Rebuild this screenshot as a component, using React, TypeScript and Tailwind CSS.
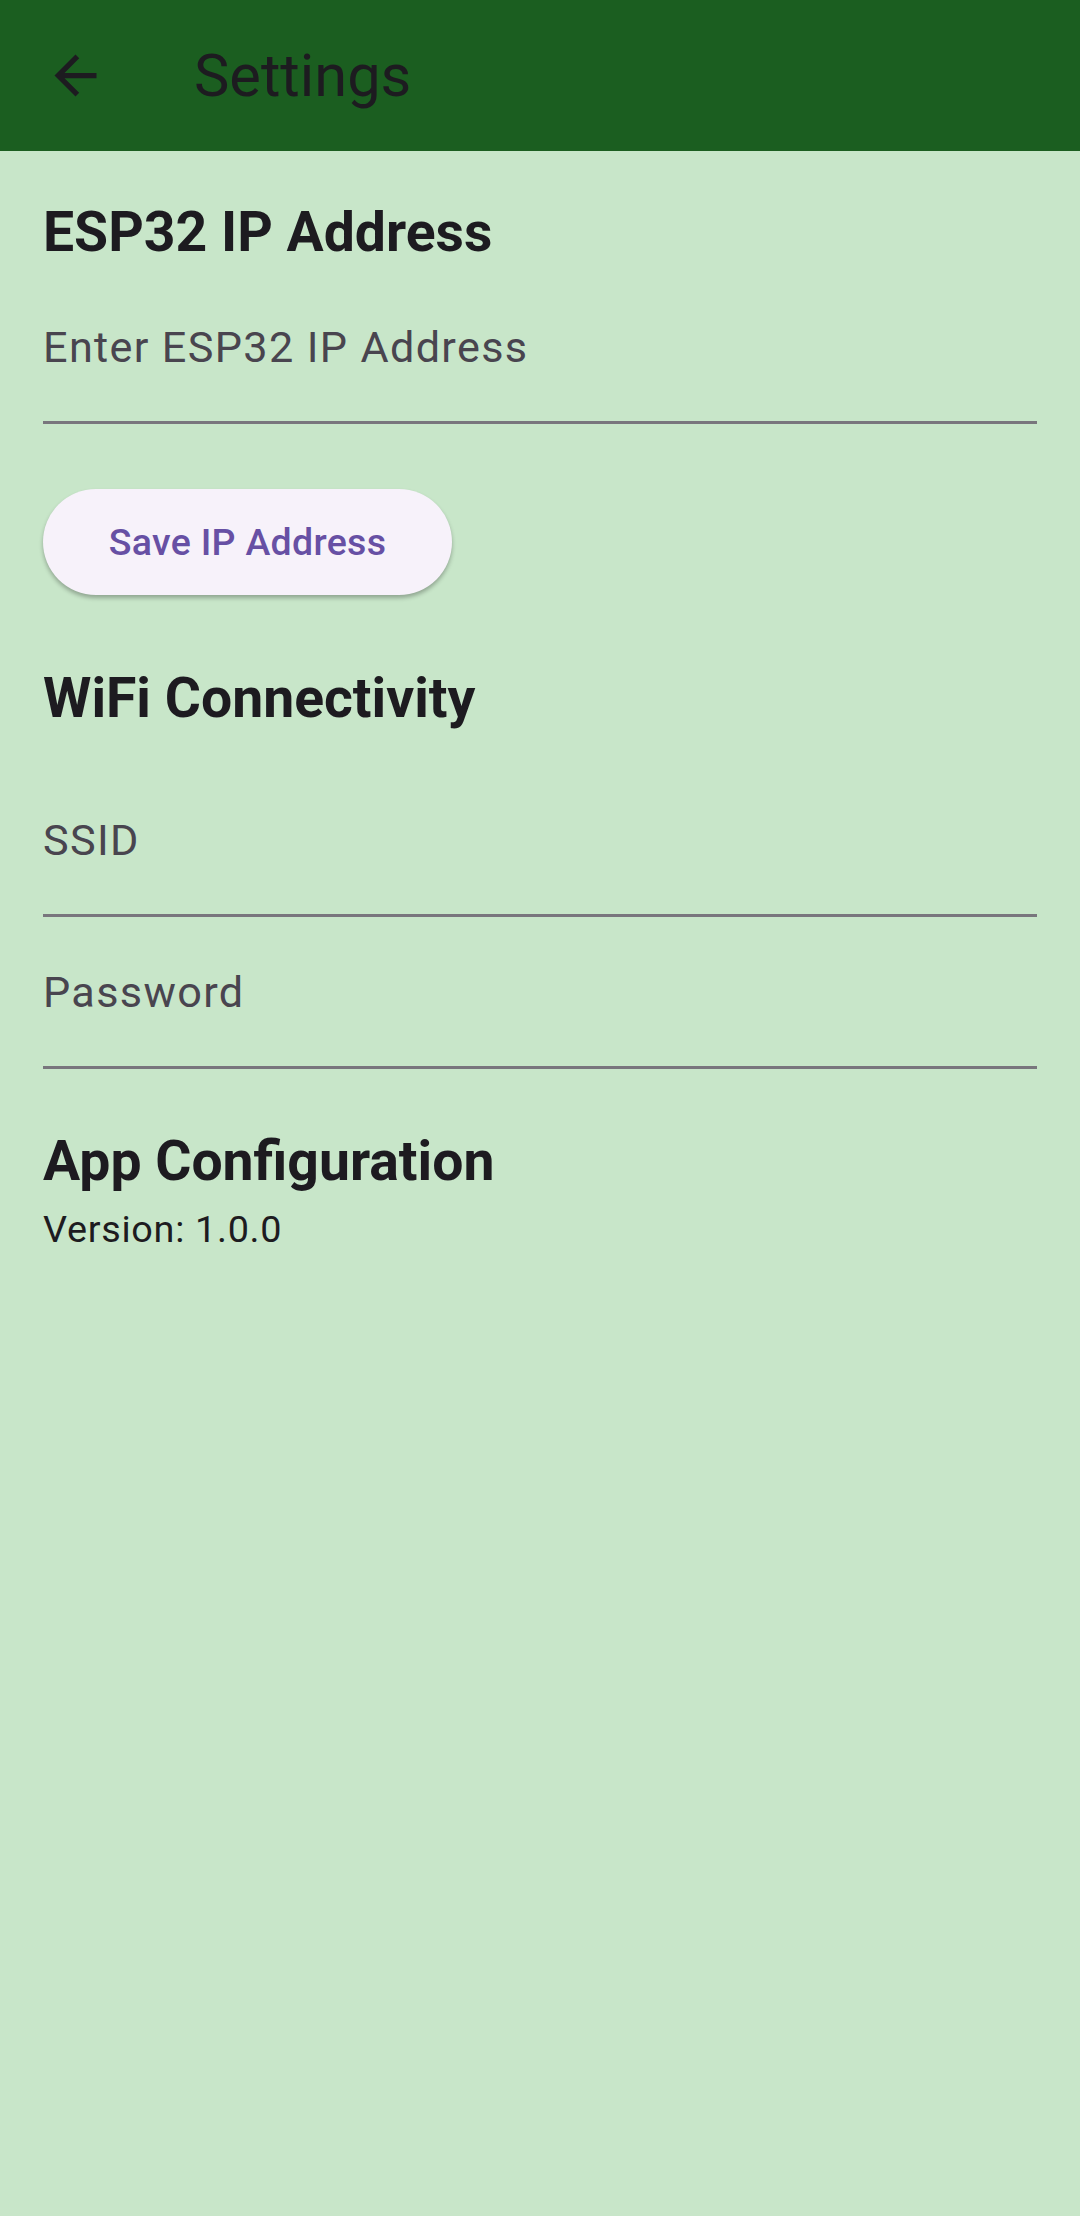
import React from "react";

function BackArrow() {
  return (
    <svg width="63" height="63" viewBox="0 0 24 24" className="block">
      <path
        fill="#1d1b20"
        d="M20 11H7.83l5.59-5.59L12 4l-8 8 8 8 1.41-1.41L7.83 13H20v-2z"
      />
    </svg>
  );
}

function Field({ label, pt }: { label: string; pt: string }) {
  return (
    <div className={`${pt} pb-[48px] border-b-[3px] border-[#79767d]`}>
      <div className="text-[43.2px] leading-[50px] tracking-[1.35px] text-[#49454f]">
        {label}
      </div>
    </div>
  );
}

export default function App() {
  return (
    <div className="min-h-[2216px] w-[1080px] bg-[#c8e6c9] font-['Roboto',sans-serif]">
      <header className="h-[151px] bg-[#1b5e20] flex items-center">
        <div className="ml-[44px]">
          <BackArrow />
        </div>
        <div className="ml-[87px] text-[59.5px] leading-[68px] text-[#1d1b20]">
          Settings
        </div>
      </header>

      <main className="px-[43px]">
        <h2 className="mt-[49px] text-[55.3px] leading-[66px] font-bold text-[#1d1b20]">
          ESP32 IP Address
        </h2>
        <Field label="Enter ESP32 IP Address" pt="pt-[57px]" />

        <button className="mt-[65px] w-[409px] h-[106px] rounded-full bg-[#f7f2fa] shadow-[0_3px_4px_rgba(0,0,0,0.28)] flex items-center justify-center text-[37.5px] font-medium tracking-[0.3px] text-[#6750a4]">
          Save IP Address
        </button>

        <h2 className="mt-[71px] text-[55.3px] leading-[66px] font-bold text-[#1d1b20]">
          WiFi Connectivity
        </h2>
        <Field label="SSID" pt="pt-[84px]" />
        <Field label="Password" pt="pt-[51px]" />

        <h2 className="mt-[60px] text-[55.3px] leading-[66px] font-bold text-[#1d1b20]">
          App Configuration
        </h2>
        <div className="mt-[12px] text-[37.8px] leading-[44px] tracking-[0.7px] text-[#1d1b20]">
          Version: 1.0.0
        </div>
      </main>
    </div>
  );
}
